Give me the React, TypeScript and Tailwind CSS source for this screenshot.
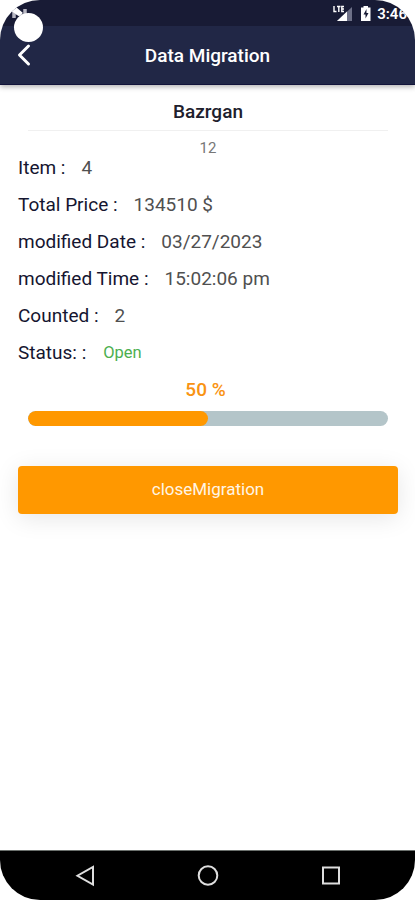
import { ChevronLeft } from 'lucide-react'

const rows = [
  { label: 'Item :', value: '4' },
  { label: 'Total Price :', value: '134510 $' },
  { label: 'modified Date :', value: '03/27/2023' },
  { label: 'modified Time :', value: '15:02:06 pm' },
  { label: 'Counted :', value: '2' },
]

function StatusBar() {
  return (
    <div className="relative z-10 h-[26px] bg-[#181b35] flex items-center justify-end pr-[8px] text-white">
      <svg className="absolute left-0 top-0" width="50" height="44" viewBox="0 0 50 44">
        <path d="M14 18V11L25 18V9" fill="none" stroke="#b9b9c4" strokeWidth="3.500" />
        <path d="M0 0H22L16 7L23 13L19 16L11 11L4 20L0 28Z" fill="#fff" />
        <circle cx="28.500" cy="27.500" r="14.500" fill="#fff" />
      </svg>
      <svg width="44" height="20" viewBox="0 0 44 20">
        <path d="M19 4V18H4Z" fill="#6d7087" />
        <path d="M14 8.500V18H4Z" fill="#fff" />
        <path d="M1 3V8.500H3.500M4 3.500H7.500M5.800 3.500V9M11 3.500H8.800V8.500H11M8.800 6H11" fill="none" stroke="#fff" strokeWidth="1.400" />
        <path d="M28 4.500H30.500V3H35V4.500H37.500V18H28V4.500Z" fill="#fff" />
        <path d="M33.500 6L30.500 11.500H32.500V15.500L35.500 10H33.500Z" fill="#181b35" />
      </svg>
      <span className="text-[15px] font-semibold leading-none mt-[2px]">3:46</span>
    </div>
  )
}

function NavBar() {
  return (
    <div className="h-[50px] border-t border-[#6b706d] bg-black grid grid-cols-3 items-center pl-[25px] pr-[23px]">
      <svg className="justify-self-center" width="24" height="24" viewBox="0 0 24 24" fill="none" stroke="#dedede" strokeWidth="2">
        <path d="M19 3V20.500L3.500 11.750Z" />
      </svg>
      <svg className="justify-self-center" width="24" height="24" viewBox="0 0 24 24" fill="none" stroke="#dedede" strokeWidth="2">
        <circle cx="12" cy="11.500" r="9.300" />
      </svg>
      <svg className="justify-self-center" width="24" height="24" viewBox="0 0 24 24" fill="none" stroke="#dedede" strokeWidth="2">
        <rect x="4" y="3.500" width="16" height="16" />
      </svg>
    </div>
  )
}

export default function App() {
  const progress = 50

  return (
    <div className="w-full h-[900px] bg-white font-[Roboto,sans-serif]">
      <div className="h-full flex flex-col rounded-[40px] overflow-hidden bg-white">
        <StatusBar />
        <header className="relative h-[59px] bg-[#212746] flex items-center justify-center border-b border-[#12133a] shadow-[0_2px_5px_rgba(0,0,0,0.3)]">
          <ChevronLeft className="absolute left-[6px] top-[11px] text-white" size={36} strokeWidth={2} />
          <h1 className="pt-[2px] text-white text-[19px] font-medium">Data Migration</h1>
        </header>

        <main className="flex-1 pl-[18px] pr-[17px]">
          <div className="mx-[10px] h-[46px] pt-[13px] border-b border-[#f0f0f0] text-center">
            <h2 className="text-[19px] leading-[28px] font-medium text-[#20202c]">Bazrgan</h2>
          </div>
          <p className="h-[19px] pt-[7px] text-center text-[15px] leading-[20px] text-[#777777]">12</p>

          <div>
            {rows.map((row) => (
              <div key={row.label} className="h-[37px] flex items-center gap-[16px] text-[19px]">
                <span className="text-[#151530]">{row.label}</span>
                <span className="text-[#505050]">{row.value}</span>
              </div>
            ))}
            <div className="h-[37px] flex items-center gap-[17px] text-[19px]">
              <span className="text-[#151530]">Status: :</span>
              <span className="text-[16.500px] text-[#4caf50]">Open</span>
            </div>
          </div>

          <div className="mx-[10px]">
            <p className="h-[39px] pr-[5px] leading-[36px] text-center text-[19px] font-medium text-[#f99312]">{progress} %</p>
            <div className="h-[15px] rounded-full bg-[#b4c5c9] overflow-hidden">
              <div className="h-full rounded-full bg-[#ff9800]" style={{ width: `${progress}%` }} />
            </div>
          </div>

          <button className="mt-[40px] w-full h-[48px] rounded-[4px] bg-[#ff9800] text-[17px] text-[#fff5e5] shadow-[0_4px_24px_rgba(0,0,0,0.1)]">
            closeMigration
          </button>
        </main>

        <NavBar />
      </div>
    </div>
  )
}
